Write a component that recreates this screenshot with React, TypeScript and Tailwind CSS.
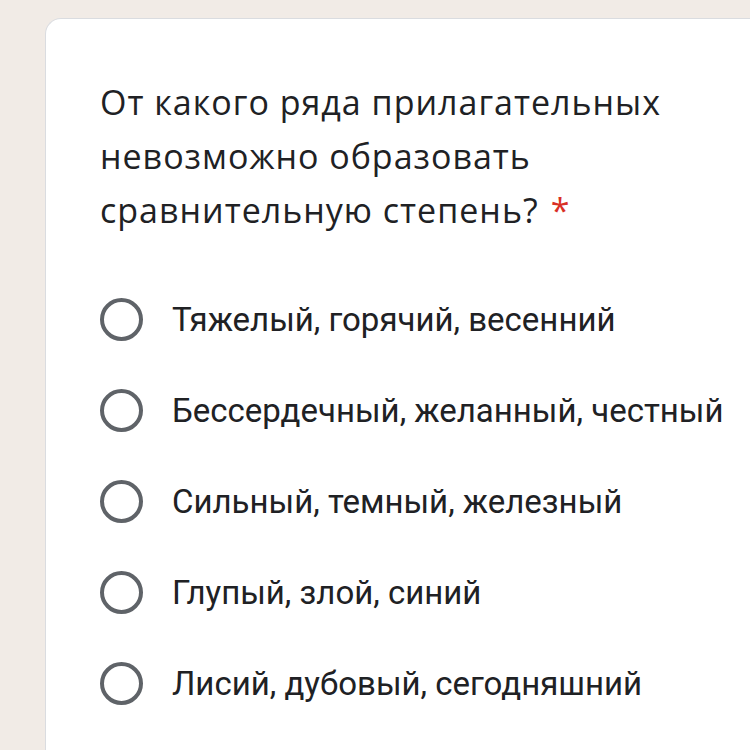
import React from 'react';

const options = [
  'Тяжелый, горячий, весенний',
  'Бессердечный, желанный, честный',
  'Сильный, темный, железный',
  'Глупый, злой, синий',
  'Лисий, дубовый, сегодняшний',
];

const App: React.FC = () => {
  return (
    <div className="w-[750px] h-[750px] overflow-hidden bg-[#f1ebe6] pl-[45px] pt-[18px]">
      <div className="h-[760px] bg-white border border-r-0 border-[#dadce0] rounded-tl-[16px] pl-[54px] pt-[56px]">
        <h1
          className="text-[34px] leading-[54px] tracking-[1px] text-[#202124] w-[620px]"
          style={{ fontFamily: '"Open Sans", "DejaVu Sans", sans-serif' }}
        >
          От какого ряда прилагательных невозможно образовать сравнительную степень?
          <span className="ml-[12px] text-[#d93025]">*</span>
        </h1>
        <div className="mt-[37px] flex flex-col">
          {options.map((opt) => (
            <label key={opt} className="h-[91px] flex items-center gap-[29px]">
              <span className="w-[43px] h-[43px] rounded-full border-[4px] border-[#5f6368] shrink-0" />
              <span
                className="text-[33px] text-[#202124] whitespace-nowrap"
                style={{ fontFamily: 'Roboto, "Liberation Sans", sans-serif' }}
              >
                {opt}
              </span>
            </label>
          ))}
        </div>
      </div>
    </div>
  );
};

export default App;
